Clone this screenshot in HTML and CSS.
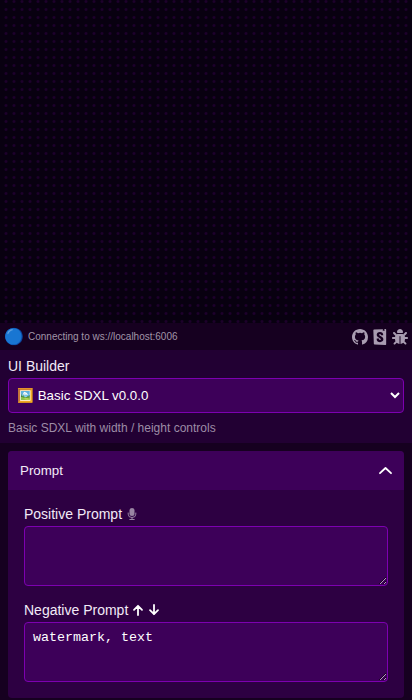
FILE: index.html
```html
<!DOCTYPE html>
<html lang="en">
<head>
<meta charset="utf-8">
<title>UI Builder</title>
<link rel="stylesheet" href="styles.css">
</head>
<body>
<div class="app">
  <div class="canvas"></div>
  <header class="status">
    <span class="dot">🔵</span>
    <span class="message">Connecting to ws://localhost:6006</span>
    <nav class="links">
      <svg viewBox="0 0 16 16"><path d="M8 0C3.58 0 0 3.58 0 8c0 3.54 2.29 6.53 5.47 7.59.4.07.55-.17.55-.38v-1.49c-2.01.37-2.53-.49-2.69-.94-.09-.23-.48-.94-.82-1.13-.28-.15-.68-.52-.01-.53.63-.01 1.08.58 1.23.82.72 1.21 1.87.87 2.33.66.07-.52.28-.87.51-1.07-1.78-.2-3.64-.89-3.64-3.95 0-.87.31-1.59.82-2.15-.08-.2-.36-1.02.08-2.12 0 0 .67-.21 2.2.82a7.6 7.6 0 0 1 4 0c1.53-1.04 2.2-.82 2.2-.82.44 1.1.16 1.92.08 2.12.51.56.82 1.27.82 2.15 0 3.07-1.87 3.75-3.65 3.95.29.25.54.73.54 1.48v2.2c0 .21.15.46.55.38A8 8 0 0 0 16 8c0-4.42-3.58-8-8-8z"/></svg>
      <svg viewBox="0 0 24 24"><path d="M16.34.24l-.12 2.71a.18.18 0 0 0 .29.15l1.06-.8.9.7a.18.18 0 0 0 .28-.14l-.1-2.76 1.33-.1a1.2 1.2 0 0 1 1.28 1.2v21.6a1.2 1.2 0 0 1-1.26 1.2l-16.1-.72a1.2 1.2 0 0 1-1.15-1.16l-.75-19.97a1.2 1.2 0 0 1 1.13-1.27L16.34.24zm-3.07 9.05c0 .47 3.16.24 3.59-.08 0-3.2-1.72-4.89-4.86-4.89-3.15 0-4.9 1.72-4.9 4.29 0 4.45 6 4.53 6 6.96 0 .7-.32 1.1-1.05 1.1-.96 0-1.35-.49-1.3-2.16 0-.36-3.65-.48-3.77 0-.27 4.03 2.23 5.2 5.1 5.2 2.79 0 4.97-1.49 4.97-4.18 0-4.77-6.1-4.64-6.1-7 0-.97.72-1.1 1.13-1.1.45 0 1.25.07 1.19 1.86z"/></svg>
      <svg viewBox="0 0 512 512"><path d="M256 0c53 0 96 43 96 96v4c0 15-13 28-29 28H189c-16 0-29-13-29-28v-4c0-53 43-96 96-96zM41 105c13-12 33-12 45 0l64 64 3 4c12-8 25-13 39-13h128c14 0 28 5 39 13l3-4 64-64c13-12 33-12 45 0s13 33 0 45l-64 64-4 3c7 12 11 25 12 39h65c18 0 32 14 32 32s-14 32-32 32h-64c0 25-6 48-16 69l55 56c13 13 13 33 0 45s-33 13-45 0l-50-49c-23 22-53 35-88 39V240c0-9-7-16-16-16s-16 7-16 16v240c-35-4-65-17-88-39l-50 49c-12 13-32 13-45 0s-13-32 0-45l55-56c-10-21-16-44-16-69H32c-18 0-32-14-32-32s14-32 32-32h65c1-14 5-27 12-39l-4-3-64-64c-12-12-12-32 0-45z"/></svg>
    </nav>
  </header>
  <section class="builder">
    <label class="title" for="workflow">UI Builder</label>
    <select id="workflow" class="field select"><option>🖼️ Basic SDXL v0.0.0</option></select>
    <p class="hint">Basic SDXL with width / height controls</p>
  </section>
  <main class="content">
    <section class="card">
      <header class="card-header">
        <span>Prompt</span>
        <svg class="chevron" viewBox="0 0 14 14"><path d="M2 9.2 7.5 4l5.5 5.2"/></svg>
      </header>
      <div class="card-body">
        <div class="prompt">
          <div class="title">Positive Prompt
            <svg class="mic" viewBox="0 0 10 12"><rect x="2.5" y="0" width="5" height="8" rx="2.5"/><path d="M1.2 5v1.2a3.8 3.3 0 0 0 7.6 0V5M5 9.5v2M2.8 11.5h4.4"/></svg>
          </div>
          <textarea class="field area"></textarea>
        </div>
        <div class="prompt">
          <div class="title">Negative Prompt
            <svg class="arrow" viewBox="0 0 12 12"><path d="M6 11V1.8M2 5.8l4-4 4 4"/></svg>
            <svg class="arrow" viewBox="0 0 12 12"><path d="M6 1v9.2M2 6.2l4 4 4-4"/></svg>
          </div>
          <textarea class="field area">watermark, text</textarea>
        </div>
      </div>
    </section>
  </main>
</div>
</body>
</html>
```
FILE: styles.css
```css
* { box-sizing: border-box; }

body {
  margin: 0;
  background: #080010;
  color: #f2eaf7;
  font-family: "Liberation Sans", Arial, sans-serif;
  font-size: 14px;
}

.app {
  height: 700px;
  overflow: hidden;
  display: flex;
  flex-direction: column;
}

.canvas {
  flex: none;
  height: 323px;
  background: radial-gradient(circle at 6px 1.5px, #20002f 0, #1b0029 1px, transparent 2px) 0 0 / 8px 8px;
}

.status {
  flex: none;
  height: 27px;
  display: flex;
  align-items: center;
  padding: 0 4px;
  background: #160020;
  color: #a195a8;
  font-size: 10px;
}

.dot {
  width: 24px;
  font-size: 16px;
  line-height: 20px;
}

.links {
  margin-left: auto;
  display: flex;
  gap: 4px;
}

.links svg {
  width: 16px;
  height: 16px;
  fill: #a99db1;
}

.builder {
  flex: none;
  height: 93px;
  padding: 8px;
  background: #220033;
}

.title {
  display: flex;
  align-items: center;
  height: 16px;
  margin-bottom: 4px;
}

.field {
  display: block;
  width: 100%;
  background: #3d0059;
  border: 1px solid #7d00b0;
  border-radius: 4px;
  color: #fff;
}

.select {
  height: 35px;
  padding: 0 4px;
  font: 13.333px "Liberation Sans", Arial, sans-serif;
}

.hint {
  margin: 8px 0 0;
  color: #9d8ca6;
  font-size: 12px;
  line-height: 14px;
}

.content {
  flex: 1;
  min-height: 0;
  padding: 8px;
  background: #160020;
}

.card {
  border-radius: 4px;
  overflow: hidden;
  background: #2d0042;
}

.card-header {
  height: 39px;
  padding: 0 12px;
  display: flex;
  align-items: center;
  justify-content: space-between;
  background: #3d0059;
  font-size: 13.333px;
}

.chevron {
  width: 14px;
  height: 14px;
}

.chevron path,
.arrow path {
  fill: none;
  stroke: #fff;
  stroke-width: 1.8;
  stroke-linecap: round;
  stroke-linejoin: round;
}

.card-body {
  padding: 16px;
  display: flex;
  flex-direction: column;
  gap: 16px;
}

.area {
  height: 60px;
  padding: 7px 8px;
  font: 13.333px/15px "Liberation Mono", monospace;
}

.mic {
  width: 10px;
  height: 12px;
  margin-left: 5px;
  fill: #9985a3;
}

.mic path {
  fill: none;
  stroke: #9985a3;
  stroke-linecap: round;
}

.arrow {
  width: 12px;
  height: 12px;
  margin-left: 4px;
}
```
